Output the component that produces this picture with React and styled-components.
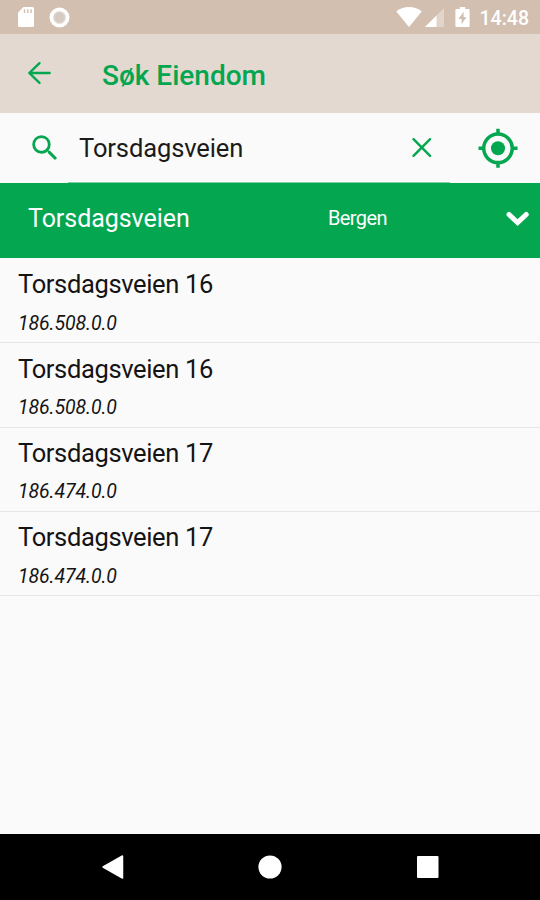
import styled, { createGlobalStyle } from "styled-components";

const green = "#04a650";

const GlobalStyle = createGlobalStyle`
  * {
    box-sizing: border-box;
  }

  body {
    margin: 0;
    font-family: Roboto, sans-serif;
    background-color: #fafafa;
  }

  svg {
    display: block;
    flex: none;
  }
`;

const Screen = styled.div`
  display: flex;
  flex-direction: column;
  width: 540px;
  height: 900px;
  overflow: hidden;
  background-color: #fafafa;
`;

const StatusBar = styled.div`
  display: flex;
  align-items: center;
  flex: none;
  height: 34px;
  padding: 0 11px 0 17px;
  background-color: #d2bfb0;
  color: #fff;
`;

const StatusGroup = styled.div`
  display: flex;
  align-items: center;
  gap: ${(props) => props.$gap || "0"};
  margin-left: ${(props) => props.$push || "0"};
`;

const Clock = styled.span`
  margin-left: 10px;
  padding-top: 3px;
  font-size: 19.5px;
  font-weight: 500;
  line-height: 31px;
`;

const Header = styled.header`
  display: flex;
  align-items: center;
  flex: none;
  height: 79px;
  padding: 0 0 1px 27px;
  background-color: #e3d9d0;
`;

const Title = styled.h1`
  margin: 6px 0 0 50px;
  color: ${green};
  font-size: 28px;
  font-weight: 500;
  line-height: 32px;
`;

const SearchBar = styled.div`
  display: flex;
  align-items: center;
  flex: none;
  height: 70px;
  padding-left: 28px;
`;

const SearchField = styled.div`
  display: flex;
  align-items: center;
  justify-content: space-between;
  width: 382px;
  height: 70px;
  margin: 0 28px 0 6px;
  padding: 0 18px 0 11px;
  border-bottom: 1px solid #7fcfa4;
  color: #1b1b1b;
  font-size: 25.5px;
  letter-spacing: -0.1px;
`;

const GroupRow = styled.div`
  display: flex;
  align-items: center;
  flex: none;
  height: 75.3px;
  padding: 0 9px 4px 28px;
  background-color: ${green};
  color: #fff;
`;

const Street = styled.span`
  width: 300px;
  font-size: 25px;
  letter-spacing: -0.05px;
`;

const City = styled.span`
  flex: 1;
  padding-bottom: 2px;
  font-size: 20px;
  letter-spacing: -0.6px;
`;

const List = styled.ul`
  flex: 1;
  margin: 0;
  padding: 0.7px 0 0;
  list-style: none;
`;

const Item = styled.li`
  height: 84.3px;
  padding: 10.5px 18px 0;
  border-bottom: 1px solid #e6e6e6;
  color: #141414;
`;

const ItemTitle = styled.div`
  font-size: 25.5px;
  letter-spacing: -0.35px;
  line-height: 30px;
`;

const ItemNumber = styled.div`
  margin-top: 12.4px;
  font-size: 19.5px;
  font-style: italic;
  letter-spacing: -0.1px;
  line-height: 24px;
`;

const NavBar = styled.nav`
  display: flex;
  align-items: center;
  justify-content: space-between;
  flex: none;
  height: 66.5px;
  padding: 0 101px;
  background-color: #000;
`;

const results = [
  { title: "Torsdagsveien 16", number: "186.508.0.0" },
  { title: "Torsdagsveien 16", number: "186.508.0.0" },
  { title: "Torsdagsveien 17", number: "186.474.0.0" },
  { title: "Torsdagsveien 17", number: "186.474.0.0" },
];

function SdCard() {
  return (
    <svg width="18" height="22" viewBox="0 0 18 22">
      <path fill="#fff" d="M6.5 1H15.5Q17 1 17 2.5V19.5Q17 21 15.5 21H2.5Q1 21 1 19.5V6.5Z" />
      <path stroke="#d2bfb0" strokeWidth="1.4" d="M7.5 3.2V7M10.8 3.2V7M14.1 3.2V7" />
    </svg>
  );
}

function Sync() {
  return (
    <svg width="21" height="21" viewBox="0 0 21 21">
      <circle cx="10.5" cy="10.5" r="10" fill="#fff" />
      <circle cx="10.5" cy="10.5" r="6.3" fill="#ddd3cb" />
      <circle cx="10.5" cy="10.5" r="4.5" fill="#d5cac1" />
    </svg>
  );
}

function Wifi() {
  return (
    <svg width="26" height="20" viewBox="0 0 26 20">
      <path fill="#fff" d="M13 20L.3 4.4C3.5 1.8 8 0 13 0s9.5 1.8 12.7 4.4Z" />
    </svg>
  );
}

function Signal() {
  return (
    <svg width="19" height="19" viewBox="0 0 19 19">
      <path fill="#fff" fillOpacity="0.35" d="M19 0V19H0Z" />
      <path fill="#fff" d="M11.5 7.5V19H0Z" />
    </svg>
  );
}

function Battery() {
  return (
    <svg width="15" height="20" viewBox="0 0 15 20">
      <path fill="#fff" d="M4.8 0H10.2V2H13.5Q14.6 2 14.6 3.2V18.8Q14.6 20 13.5 20H1.5Q.4 20 .4 18.8V3.2Q.4 2 1.5 2H4.8Z" />
      <path fill="#d2bfb0" d="M8.6 4.8L3.5 12H6.6V17.2L11.5 10H8.6Z" />
    </svg>
  );
}

function App() {
  return (
    <>
      <GlobalStyle />
      <Screen>
        <StatusBar>
          <StatusGroup $gap="14px">
            <SdCard />
            <Sync />
          </StatusGroup>
          <StatusGroup $gap="3px" $push="auto">
            <Wifi />
            <Signal />
          </StatusGroup>
          <StatusGroup $push="11px">
            <Battery />
            <Clock>14:48</Clock>
          </StatusGroup>
        </StatusBar>

        <Header>
          <svg width="25" height="24" viewBox="0 0 25 24" fill="none" stroke={green} strokeWidth="2.4" strokeLinecap="round" strokeLinejoin="round">
            <path d="M12.5 2.2L2.3 12L12.5 21.8M2.8 12H22.6" />
          </svg>
          <Title>Søk Eiendom</Title>
        </Header>

        <SearchBar>
          <svg width="34" height="34" viewBox="0 0 24 24" fill={green}>
            <path d="M15.5 14h-.79l-.28-.27A6.471 6.471 0 0 0 16 9.5 6.5 6.5 0 1 0 9.5 16c1.61 0 3.09-.59 4.23-1.57l.27.28v.79l5 4.99L20.49 19l-4.99-5zm-6 0C7.01 14 5 11.99 5 9.5S7.01 5 9.5 5 14 7.01 14 9.5 11.99 14 9.5 14z" />
          </svg>
          <SearchField>
            <span>Torsdagsveien</span>
            <svg width="21" height="21" viewBox="0 0 21 21" stroke={green} strokeWidth="2.4" strokeLinecap="round">
              <path d="M2.5 2.2L19.1 18.8M19.1 2.2L2.5 18.8" />
            </svg>
          </SearchField>
          <svg width="40" height="40" viewBox="0 0 40 40" fill="none" stroke={green} strokeWidth="3.5">
            <circle cx="20" cy="20.3" r="14.3" />
            <circle cx="20" cy="20.3" r="7" fill={green} stroke="none" />
            <path d="M20 .8V6M20 34V39.8M.5 20.3H6M34 20.3H39.5" />
          </svg>
        </SearchBar>

        <GroupRow>
          <Street>Torsdagsveien</Street>
          <City>Bergen</City>
          <svg width="26" height="18" viewBox="0 0 26 18" fill="none" stroke="#fff" strokeWidth="5" strokeLinecap="round">
            <path d="M4 4.5L12.6 12.6L21.2 4.5" />
          </svg>
        </GroupRow>

        <List>
          {results.map((item, index) => (
            <Item key={index}>
              <ItemTitle>{item.title}</ItemTitle>
              <ItemNumber>{item.number}</ItemNumber>
            </Item>
          ))}
        </List>

        <NavBar>
          <svg width="24" height="26" viewBox="0 0 24 26">
            <path fill="#fff" stroke="#fff" strokeWidth="1.5" strokeLinejoin="round" d="M21.5 2V24L2.1 13Z" />
          </svg>
          <svg width="24" height="24" viewBox="0 0 24 24">
            <circle cx="12" cy="12" r="11.6" fill="#fff" />
          </svg>
          <svg width="24" height="24" viewBox="0 0 24 24">
            <rect x="2" y="1" width="21.5" height="22" rx="1" fill="#fff" />
          </svg>
        </NavBar>
      </Screen>
    </>
  );
}

export default App;
